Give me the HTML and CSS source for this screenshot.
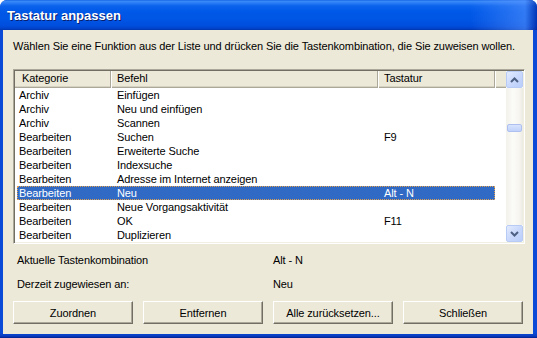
FILE: index.html
```html
<!DOCTYPE html>
<html lang="de">
<head>
<meta charset="utf-8">
<title>Tastatur anpassen</title>
<link rel="stylesheet" href="styles.css">
</head>
<body>
<div class="window">
  <div class="titlebar"><span class="title">Tastatur anpassen</span></div>
  <div class="client">
    <p class="intro">Wählen Sie eine Funktion aus der Liste und drücken Sie die Tastenkombination, die Sie zuweisen wollen.</p>
    <div class="listbox">
      <div class="listmain">
        <div class="lvhead">
          <div class="hc c1">Kategorie</div>
          <div class="hc c2">Befehl</div>
          <div class="hc c3">Tastatur</div>
          <div class="hc filler"></div>
        </div>
        <div class="rows">
          <div class="row"><span class="c1">Archiv</span><span class="c2">Einfügen</span><span class="c3"></span></div>
          <div class="row"><span class="c1">Archiv</span><span class="c2">Neu und einfügen</span><span class="c3"></span></div>
          <div class="row"><span class="c1">Archiv</span><span class="c2">Scannen</span><span class="c3"></span></div>
          <div class="row"><span class="c1">Bearbeiten</span><span class="c2">Suchen</span><span class="c3">F9</span></div>
          <div class="row"><span class="c1">Bearbeiten</span><span class="c2">Erweiterte Suche</span><span class="c3"></span></div>
          <div class="row"><span class="c1">Bearbeiten</span><span class="c2">Indexsuche</span><span class="c3"></span></div>
          <div class="row"><span class="c1">Bearbeiten</span><span class="c2">Adresse im Internet anzeigen</span><span class="c3"></span></div>
          <div class="row selected"><span class="c1">Bearbeiten</span><span class="c2">Neu</span><span class="c3">Alt - N</span></div>
          <div class="row"><span class="c1">Bearbeiten</span><span class="c2">Neue Vorgangsaktivität</span><span class="c3"></span></div>
          <div class="row"><span class="c1">Bearbeiten</span><span class="c2">OK</span><span class="c3">F11</span></div>
          <div class="row"><span class="c1">Bearbeiten</span><span class="c2">Duplizieren</span><span class="c3"></span></div>
        </div>
      </div>
      <div class="vscroll">
        <div class="sbtn">
          <svg width="9" height="6" viewBox="0 0 9 6"><path d="M1 5 L4.5 1.5 L8 5" fill="none" stroke="#4d6185" stroke-width="2"/></svg>
        </div>
        <div class="track"><div class="thumb" style="margin-top:36px"></div></div>
        <div class="sbtn">
          <svg width="9" height="6" viewBox="0 0 9 6"><path d="M1 1 L4.5 4.5 L8 1" fill="none" stroke="#4d6185" stroke-width="2"/></svg>
        </div>
      </div>
    </div>
    <div class="info">
      <span>Aktuelle Tastenkombination</span><span>Alt - N</span>
      <span>Derzeit zugewiesen an:</span><span>Neu</span>
    </div>
    <div class="buttons">
      <button class="btn">Zuordnen</button>
      <button class="btn">Entfernen</button>
      <button class="btn">Alle zurücksetzen...</button>
      <button class="btn">Schließen</button>
    </div>
  </div>
</div>
</body>
</html>
```

FILE: styles.css
```css
* { box-sizing: border-box; }
html, body { margin: 0; padding: 0; background: #ffffff; }
body { width: 537px; height: 338px; overflow: hidden; font-family: "Liberation Sans", Arial, sans-serif; font-size: 11px; color: #000; letter-spacing: -0.1px; }

.window {
  width: 537px; height: 338px;
  display: flex; flex-direction: column;
  border-radius: 7px 7px 0 0;
  overflow: hidden;
  background: linear-gradient(to bottom, #0a4ad6 0, #0a4ad6 333px, #0a3cc0 336px, #00208c 338px);
}

.titlebar {
  height: 30px; flex: none;
  display: flex; align-items: center;
  padding-left: 7px;
  background:
    linear-gradient(to right, rgba(0,0,0,0) 0, rgba(0,0,0,0) 470px, rgba(90,150,255,0.55) 525px, rgba(0,30,150,0.6) 537px),
    linear-gradient(to bottom, #0a5ce0 0, #3d8cf8 1px, #2a7cf6 3px, #0a62ec 6px, #0058e8 12px, #0055e4 20px, #004ddc 26px, #0040c4 29px, #0032a8 30px);
}
.title {
  font-family: "Liberation Sans", Arial, sans-serif;
  font-weight: bold; font-size: 13px; color: #fff;
  text-shadow: 1px 1px 0 #0a1e6e;
  letter-spacing: 0;
  padding-top: 1px;
}

.client {
  flex: 1;
  margin: 0 4px 4px 3px;
  background: #ece9d8;
  display: flex; flex-direction: column;
  padding: 10px 0 9px 0;
}

.intro { margin: 0 0 16px 10px; line-height: 13px; white-space: nowrap; }

.listbox {
  margin-left: 10px; width: 512px; height: 175px;
  display: flex;
  background: #fff;
  border: 1px solid;
  border-color: #aca899 #fff #fff #aca899;
  box-shadow: inset 1px 1px 0 #716f64, inset -1px -1px 0 #f1efe2;
  padding: 1px;
}
.listmain { flex: 1; display: flex; flex-direction: column; min-width: 0; }

.lvhead { display: flex; height: 17px; flex: none; }
.hc {
  background: #ece9d8;
  border-right: 1px solid #aca899;
  box-shadow: inset 1px 0 0 #fff, inset 0 -1px 0 #aca899, inset 0 -2px 0 #d6d2c2;
  line-height: 15px; padding-left: 6px; white-space: nowrap;
}
.hc.c1 { width: 96px; padding-left: 7px; box-shadow: inset 0 -1px 0 #aca899, inset 0 -2px 0 #d6d2c2; }
.hc.c2 { width: 267px; }
.hc.c3 { width: 117px; }
.hc.filler { flex: 1; border-right: none; }

.rows { padding: 0 0 0 2px; }
.row { display: flex; height: 14px; line-height: 14px; width: 478px; white-space: nowrap; }
.row .c1 { width: 94px; padding-left: 2px; }
.row .c2 { width: 267px; padding-left: 6px; }
.row .c3 { width: 117px; padding-left: 6px; }
.row.selected { background: #316ac5; color: #fff; outline: 1px dotted #e0a050; outline-offset: -1px; }

.vscroll { width: 17px; flex: none; display: flex; flex-direction: column; }
.sbtn {
  width: 17px; height: 17px; flex: none;
  display: flex; align-items: center; justify-content: center;
  border: 1px solid #b7cbf5; border-radius: 2px;
  background: linear-gradient(135deg, #e3ebfd 0, #cad9fc 50%, #b9cefa 100%);
}
.track {
  flex: 1;
  background: linear-gradient(to right, #f2f1ea 0, #fbfbf8 40%, #f7f6f1 75%, #ecebe2 100%);
}
.thumb {
  width: 15px; height: 8px; margin-left: 1px;
  border: 1px solid #aebff0; border-radius: 2px;
  background: linear-gradient(to bottom, #d9e4fd, #c0d2fb);
}

.info {
  display: grid; grid-template-columns: 256px 1fr;
  row-gap: 11px;
  margin: 10px 0 0 14px;
  line-height: 13px;
}

.buttons { display: flex; gap: 10px; margin: 10px 0 0 10px; }
.btn {
  width: 120px; height: 23px;
  font-family: "Liberation Sans", Arial, sans-serif; font-size: 11px; color: #000;
  letter-spacing: -0.1px;
  background: #ece9d8;
  border: 1px solid; border-color: #fff #716f64 #716f64 #fff;
  box-shadow: inset -1px -1px 0 #aca899;
  padding: 0;
}
```
